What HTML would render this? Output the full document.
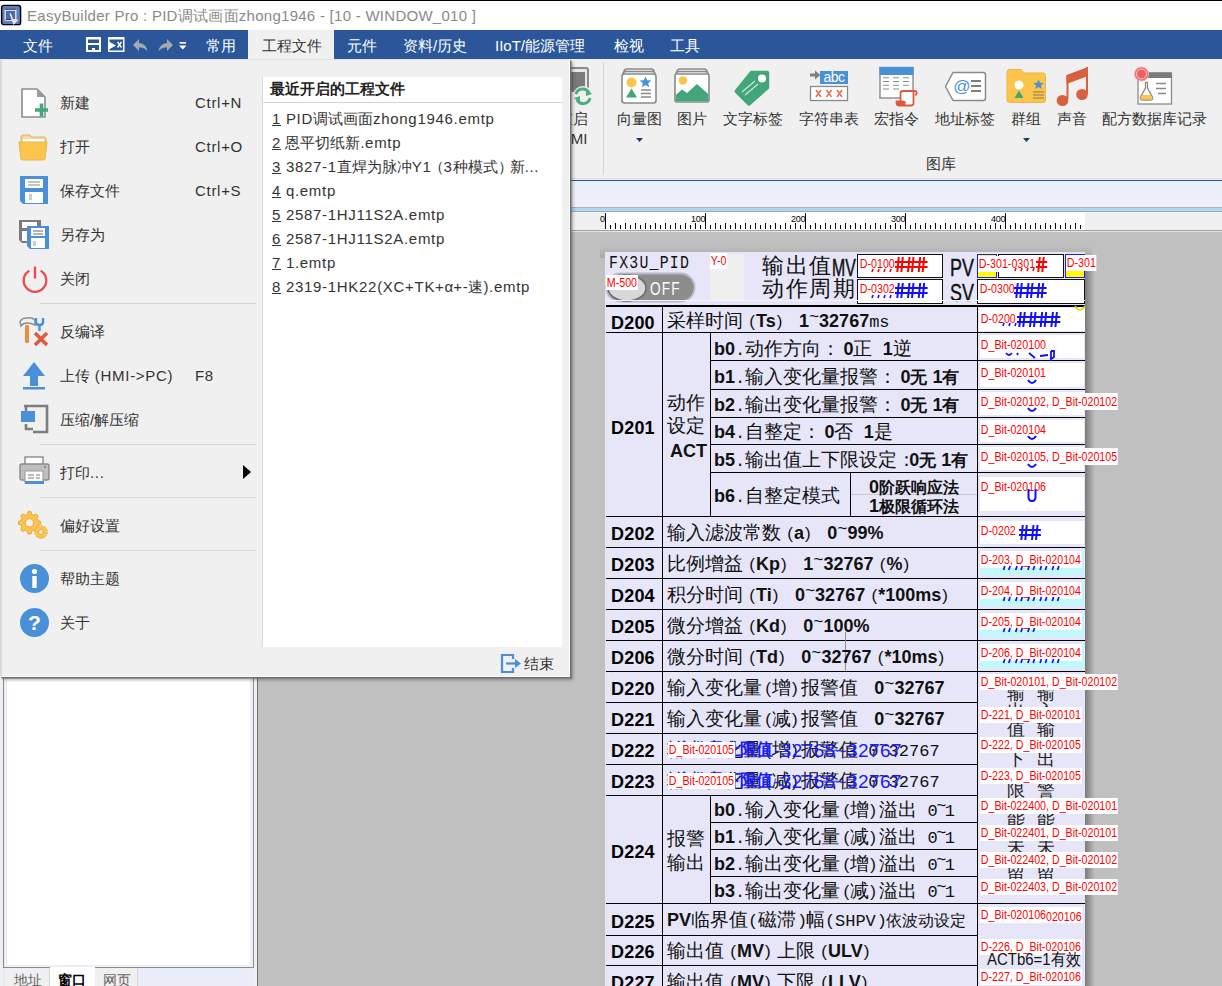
<!DOCTYPE html>
<html><head><meta charset="utf-8">
<style>
*{margin:0;padding:0;box-sizing:border-box}
html,body{width:1222px;height:986px;overflow:hidden;background:#f0f0f0;font-family:"Liberation Sans",sans-serif;position:relative}
.a{position:absolute}
.t{position:absolute;white-space:nowrap;line-height:1}
.lb{position:absolute;white-space:nowrap;line-height:1;font-size:13px;color:#f00;background:#fff;padding:0 1px;transform:scaleX(0.82);transform-origin:0 0}
svg{position:absolute;overflow:visible}
.lp{display:inline-block;width:13px;text-align:right;padding-right:1px;font-size:17px}
.rp{display:inline-block;width:13px;text-align:left;padding-left:1px;font-size:17px}
</style></head><body>
<div class="a" style="left:0px;top:0px;width:1222px;height:1px;background:#000;"></div>
<div class="a" style="left:0px;top:1px;width:1222px;height:29px;background:#fff;"></div>
<svg style="left:0px;top:4px" width="23" height="23"><rect x="1.6" y="1.4" width="19" height="19.2" rx="2.2" fill="#5f7cbc" stroke="#000" stroke-width="1.4"/><rect x="5.2" y="6.2" width="10.6" height="10" fill="#4a68aa" stroke="#f4f4f4" stroke-width="1.2"/><path d="M5 5.3H16" stroke="#4a3a30" stroke-width="0.9"/><path d="M5.6 15.5H11" stroke="#3a3030" stroke-width="0.9"/><path d="M10 9.5L13 15L18.5 15.8L13.5 21L11.5 15.5Z" fill="#dfe6f2"/><path d="M10 9.5L12.2 14" stroke="#fff" stroke-width="1.3"/></svg>
<div class="t" style="left:27px;top:8px;font-size:15px;color:#8a8a8a;letter-spacing:0.27px">EasyBuilder Pro : PID调试画面zhong1946 - [10 - WINDOW_010 ]</div>
<div class="a" style="left:0px;top:30px;width:1222px;height:29px;background:#2b579a;"></div>
<div class="a" style="left:248px;top:30px;width:86px;height:29px;background:#f0f0f0;"></div>
<div class="t" style="left:23px;top:38px;font-size:15px;color:#fff;">文件</div>
<div class="t" style="left:206px;top:38px;font-size:15px;color:#fff;">常用</div>
<div class="t" style="left:347px;top:38px;font-size:15px;color:#fff;">元件</div>
<div class="t" style="left:403px;top:38px;font-size:15px;color:#fff;">资料/历史</div>
<div class="t" style="left:495px;top:38px;font-size:15px;color:#fff;">IIoT/能源管理</div>
<div class="t" style="left:614px;top:38px;font-size:15px;color:#fff;">检视</div>
<div class="t" style="left:670px;top:38px;font-size:15px;color:#fff;">工具</div>
<div class="t" style="left:262px;top:38px;font-size:15px;color:#333;">工程文件</div>
<svg style="left:86px;top:37px" width="15" height="15"><rect x="0" y="0" width="15" height="15" fill="#fff"/><rect x="2" y="2.5" width="11" height="3.5" fill="#2b579a"/><rect x="2" y="8" width="11" height="5" fill="#2b579a"/><rect x="6" y="11" width="3" height="4" fill="#fff"/></svg>
<svg style="left:108px;top:37px" width="17" height="15"><rect x="0" y="0" width="16.5" height="15" fill="#fff"/><rect x="1.5" y="2.5" width="13.5" height="10.5" fill="#2b579a"/><path d="M0 4L8 8.5L0 13Z" fill="#fff"/><path d="M9.5 5L13.5 10.5M13.5 5L9.5 10.5" stroke="#fff" stroke-width="1.4"/><rect x="1.5" y="13" width="13.5" height="1" fill="#9fb3d6"/></svg>
<svg style="left:133px;top:39px" width="16" height="13"><path d="M6 0L0 6L6 12V8.5Q11.5 8 14.5 12.5Q13.5 4.5 6 4Z" fill="#a4a8b2"/></svg>
<svg style="left:157px;top:39px" width="16" height="13"><path d="M10 0L16 6L10 12V8.5Q4.5 8 1.5 12.5Q2.5 4.5 10 4Z" fill="#a4a8b2"/></svg>
<svg style="left:179px;top:42px" width="8" height="10"><rect x="0.5" y="0" width="6.5" height="1.6" fill="#fff"/><path d="M0 3.5H7.5L3.75 7.5Z" fill="#fff"/></svg>
<div class="a" style="left:0px;top:59px;width:1222px;height:121px;background:#f0f0f0;"></div>
<div class="a" style="left:0px;top:178px;width:1222px;height:1px;background:#dcdcdc;"></div>
<div class="a" style="left:603px;top:62px;width:1px;height:113px;background:#d5d5d5;"></div>
<div class="a" style="left:0px;top:180px;width:1222px;height:1px;background:#2b579a;"></div>
<div class="a" style="left:0px;top:181px;width:1222px;height:27px;background:#edf0fa;"></div>
<div class="a" style="left:0px;top:207px;width:1222px;height:1px;background:#b0b0b0;"></div>
<div class="a" style="left:0px;top:208px;width:1222px;height:3px;background:#afd6f3;"></div>
<div class="a" style="left:0px;top:211px;width:1222px;height:1px;background:#a8a8a8;"></div>
<div class="a" style="left:0px;top:212px;width:1222px;height:18px;background:#f0f0f0;"></div>
<div class="a" style="left:605px;top:212px;width:480px;height:18px;background:#fff;"></div>
<div class="a" style="left:0px;top:230px;width:1222px;height:1px;background:#a0a0a0;"></div>
<div class="a" style="left:0px;top:231px;width:1222px;height:1px;background:#e6e6e6;"></div>
<svg style="left:0;top:0" width="1222" height="240"><g fill="#000"><rect x="605" y="213" width="1" height="16"/><rect x="610" y="225" width="1" height="4"/><rect x="615" y="223" width="1" height="6"/><rect x="620" y="225" width="1" height="4"/><rect x="625" y="223" width="1" height="6"/><rect x="630" y="225" width="1" height="4"/><rect x="635" y="223" width="1" height="6"/><rect x="640" y="225" width="1" height="4"/><rect x="645" y="223" width="1" height="6"/><rect x="650" y="225" width="1" height="4"/><rect x="655" y="223" width="1" height="6"/><rect x="660" y="225" width="1" height="4"/><rect x="665" y="223" width="1" height="6"/><rect x="670" y="225" width="1" height="4"/><rect x="675" y="223" width="1" height="6"/><rect x="680" y="225" width="1" height="4"/><rect x="685" y="223" width="1" height="6"/><rect x="690" y="225" width="1" height="4"/><rect x="695" y="223" width="1" height="6"/><rect x="700" y="225" width="1" height="4"/><rect x="705" y="213" width="1" height="16"/><rect x="710" y="225" width="1" height="4"/><rect x="715" y="223" width="1" height="6"/><rect x="720" y="225" width="1" height="4"/><rect x="725" y="223" width="1" height="6"/><rect x="730" y="225" width="1" height="4"/><rect x="735" y="223" width="1" height="6"/><rect x="740" y="225" width="1" height="4"/><rect x="745" y="223" width="1" height="6"/><rect x="750" y="225" width="1" height="4"/><rect x="755" y="223" width="1" height="6"/><rect x="760" y="225" width="1" height="4"/><rect x="765" y="223" width="1" height="6"/><rect x="770" y="225" width="1" height="4"/><rect x="775" y="223" width="1" height="6"/><rect x="780" y="225" width="1" height="4"/><rect x="785" y="223" width="1" height="6"/><rect x="790" y="225" width="1" height="4"/><rect x="795" y="223" width="1" height="6"/><rect x="800" y="225" width="1" height="4"/><rect x="805" y="213" width="1" height="16"/><rect x="810" y="225" width="1" height="4"/><rect x="815" y="223" width="1" height="6"/><rect x="820" y="225" width="1" height="4"/><rect x="825" y="223" width="1" height="6"/><rect x="830" y="225" width="1" height="4"/><rect x="835" y="223" width="1" height="6"/><rect x="840" y="225" width="1" height="4"/><rect x="845" y="223" width="1" height="6"/><rect x="850" y="225" width="1" height="4"/><rect x="855" y="223" width="1" height="6"/><rect x="860" y="225" width="1" height="4"/><rect x="865" y="223" width="1" height="6"/><rect x="870" y="225" width="1" height="4"/><rect x="875" y="223" width="1" height="6"/><rect x="880" y="225" width="1" height="4"/><rect x="885" y="223" width="1" height="6"/><rect x="890" y="225" width="1" height="4"/><rect x="895" y="223" width="1" height="6"/><rect x="900" y="225" width="1" height="4"/><rect x="905" y="213" width="1" height="16"/><rect x="910" y="225" width="1" height="4"/><rect x="915" y="223" width="1" height="6"/><rect x="920" y="225" width="1" height="4"/><rect x="925" y="223" width="1" height="6"/><rect x="930" y="225" width="1" height="4"/><rect x="935" y="223" width="1" height="6"/><rect x="940" y="225" width="1" height="4"/><rect x="945" y="223" width="1" height="6"/><rect x="950" y="225" width="1" height="4"/><rect x="955" y="223" width="1" height="6"/><rect x="960" y="225" width="1" height="4"/><rect x="965" y="223" width="1" height="6"/><rect x="970" y="225" width="1" height="4"/><rect x="975" y="223" width="1" height="6"/><rect x="980" y="225" width="1" height="4"/><rect x="985" y="223" width="1" height="6"/><rect x="990" y="225" width="1" height="4"/><rect x="995" y="223" width="1" height="6"/><rect x="1000" y="225" width="1" height="4"/><rect x="1005" y="213" width="1" height="16"/><rect x="1010" y="225" width="1" height="4"/><rect x="1015" y="223" width="1" height="6"/><rect x="1020" y="225" width="1" height="4"/><rect x="1025" y="223" width="1" height="6"/><rect x="1030" y="225" width="1" height="4"/><rect x="1035" y="223" width="1" height="6"/><rect x="1040" y="225" width="1" height="4"/><rect x="1045" y="223" width="1" height="6"/><rect x="1050" y="225" width="1" height="4"/><rect x="1055" y="223" width="1" height="6"/><rect x="1060" y="225" width="1" height="4"/><rect x="1065" y="223" width="1" height="6"/><rect x="1070" y="225" width="1" height="4"/><rect x="1075" y="223" width="1" height="6"/><rect x="1080" y="225" width="1" height="4"/></g></svg>
<div class="t" style="left:600.0px;top:215px;font-size:9px;color:#000;letter-spacing:-0.3px">0</div>
<div class="t" style="left:691.0px;top:215px;font-size:9px;color:#000;letter-spacing:-0.3px">100</div>
<div class="t" style="left:791.0px;top:215px;font-size:9px;color:#000;letter-spacing:-0.3px">200</div>
<div class="t" style="left:891.0px;top:215px;font-size:9px;color:#000;letter-spacing:-0.3px">300</div>
<div class="t" style="left:991.0px;top:215px;font-size:9px;color:#000;letter-spacing:-0.3px">400</div>
<div class="a" style="left:257px;top:232px;width:965px;height:754px;background:#c0c0c0;"></div>
<div class="a" style="left:256px;top:212px;width:2px;height:774px;background:#707070;"></div>
<div class="a" style="left:1085px;top:258px;width:10px;height:728px;background:linear-gradient(90deg,#7a7a7a,#c0c0c0)"></div>
<div class="a" style="left:600px;top:246px;width:492px;height:12px;background:linear-gradient(180deg,#c0c0c0,#a8a8a8)"></div>
<div class="a" style="left:0px;top:60px;width:257px;height:926px;background:#f0f0f0;"></div>
<div class="a" style="left:3px;top:968px;width:251px;height:18px;background:#eaecf8;"></div>
<div class="a" style="left:3px;top:60px;width:251px;height:908px;background:#fff;border:1px solid #8c8c8c;box-shadow:inset 3px 0 0 #eceefa, inset -3px -2px 0 #eceefa"></div>
<div class="a" style="left:3px;top:968px;width:47px;height:18px;background:#f0f0f0;border-right:1px solid #d8d8d8;border-left:2px solid #e6e8f8"></div>
<div class="a" style="left:50px;top:967px;width:45px;height:19px;background:#fff;"></div>
<div class="a" style="left:95px;top:968px;width:43px;height:18px;background:#f0f0f0;border-right:1px solid #d8d8d8"></div>
<div class="t" style="left:14px;top:973px;font-size:14px;color:#666;">地址</div>
<div class="t" style="left:58px;top:973px;font-size:14px;color:#000;font-weight:bold">窗口</div>
<div class="t" style="left:103px;top:973px;font-size:14px;color:#666;">网页</div>
<svg style="left:555px;top:67px" width="40" height="40"><rect x="0" y="1" width="33" height="23" rx="2" fill="#e8e8e8" stroke="#8a8a8a" stroke-width="2"/><rect x="3" y="5" width="27" height="18" fill="#7a7a7a"/>
<circle cx="28" cy="29" r="10" fill="#f0f0f0"/>
<path d="M21 27A7 7 0 0 1 34 26" fill="none" stroke="#4caf84" stroke-width="3"/><path d="M31 22L37 27L31 29Z" fill="#4caf84"/>
<path d="M35 31A7 7 0 0 1 22 33" fill="none" stroke="#4caf84" stroke-width="3"/><path d="M25 36L19 31L25 29Z" fill="#4caf84"/></svg>
<div class="t" style="left:558px;top:111px;font-size:15px;color:#333;">重启</div>
<div class="t" style="left:560px;top:131px;font-size:15px;color:#333;">HMI</div>
<svg style="left:621px;top:68px" width="37" height="37">
<path d="M3 4Q3 1 6 1H30Q33 1 33 4" fill="none" stroke="#8a8a8a" stroke-width="1.5"/>
<path d="M2 6Q2 3.5 5 3.5H31Q34 3.5 34 6" fill="none" stroke="#8a8a8a" stroke-width="1.5"/>
<rect x="1" y="6" width="34" height="29" rx="2.5" fill="#fff" stroke="#8a8a8a" stroke-width="1.6"/>
<circle cx="10.5" cy="14.5" r="5" fill="#fcc44a"/>
<path d="M24.5 8.5L26.2 12.3L30.3 12.6L27.2 15.2L28.2 19.2L24.5 17L20.8 19.2L21.8 15.2L18.7 12.6L22.8 12.3Z" fill="#4a90d9"/>
<path d="M10.5 20.5L16 29.5H5Z" fill="#43a67a"/>
<path d="M20 22H30M20 25.5H30M20 29H30" stroke="#8a8a8a" stroke-width="1.3"/>
</svg>
<div class="t" style="left:539px;width:200px;text-align:center;top:111px;font-size:15px;color:#333">向量图</div>
<svg style="left:636px;top:138px" width="8" height="5"><path d="M0 0H7L3.5 4Z" fill="#1f3b6e"/></svg>
<svg style="left:674px;top:68px" width="37" height="36">
<path d="M3 4Q3 1 6 1H30Q33 1 33 4" fill="none" stroke="#8a8a8a" stroke-width="1.5"/>
<path d="M2 6Q2 3.5 5 3.5H31Q34 3.5 34 6" fill="none" stroke="#8a8a8a" stroke-width="1.5"/>
<rect x="1" y="6" width="34" height="28" rx="1.5" fill="#fff" stroke="#8a8a8a" stroke-width="1.6"/>
<circle cx="9" cy="12.5" r="4.2" fill="#fcc44a"/>
<path d="M1.8 33.2V27L8 21.5L13 25L23 16L34.2 26V33.2Z" fill="#43a67a"/>
</svg>
<div class="t" style="left:592px;width:200px;text-align:center;top:111px;font-size:15px;color:#333">图片</div>
<svg style="left:734px;top:69px" width="37" height="37">
<path d="M17 2.5H33Q34.5 2.5 34.5 4V19L16 35.5Q15 36.5 14 35.5L1.5 23Q1 22 2 21Z" fill="#43a67a" stroke="#43a67a" stroke-width="1.5" stroke-linejoin="round"/>
<circle cx="28" cy="9.5" r="4" fill="#fff"/>
<path d="M8 23L21 12M11 26L24 15" stroke="#c8e8d8" stroke-width="1.3"/>
</svg>
<div class="t" style="left:653px;width:200px;text-align:center;top:111px;font-size:15px;color:#333">文字标签</div>
<svg style="left:809px;top:70px" width="42" height="34">
<path d="M1 5H7" stroke="#808080" stroke-width="3"/><path d="M6 0.5L11.5 5L6 9.5Z" fill="#808080"/>
<rect x="11" y="1" width="28" height="13" fill="#4a90d9"/>
<text x="25" y="12" text-anchor="middle" font-family="Liberation Sans" font-size="14" fill="#fff" letter-spacing="-0.5">abc</text>
<rect x="1.5" y="16.5" width="37" height="14" fill="#fff" stroke="#8a8a8a" stroke-width="1.3"/>
<path d="M7 20L12 27M12 20L7 27M17.5 20L22.5 27M22.5 20L17.5 27M28 20L33 27M33 20L28 27" stroke="#e0705a" stroke-width="1.6"/>
</svg>
<div class="t" style="left:729px;width:200px;text-align:center;top:111px;font-size:15px;color:#333">字符串表</div>
<svg style="left:878px;top:66px" width="42" height="42">
<rect x="2" y="1.5" width="33" height="30.5" fill="#fff" stroke="#8a8a8a" stroke-width="1.4"/>
<rect x="1.5" y="1" width="34" height="8" fill="#4a90d9"/>
<path d="M5 11.7H11M15 11.7H21M25 11.7H31M5 15.5H11M15 15.5H21M25 15.5H31M5 19.3H11M15 19.3H21M25 19.3H31M5 23H11M15 23H21" stroke="#8a8a8a" stroke-width="1.1"/>
<path d="M22 33V27Q22 24.5 25 24.5H38L38 27.5H36V37Q36 39.5 33 39.5H21Q18.5 39.5 18 36Z" fill="#fff"/>
<path d="M22.5 35V27Q22.5 25 25 25H37Q39 25 38.5 27.5L37.5 29.5M35.5 26V37Q35.5 39.5 33 39.5H21.5Q18.5 39.5 18.5 36.5V35.5H25Q26.5 35.5 27.5 37.5" fill="none" stroke="#dd5a3c" stroke-width="1.8" stroke-linejoin="round"/>
<path d="M18.5 36H25Q26.5 36 27.5 39.5H21Q18.5 39.5 18.5 37Z" fill="#dd5a3c"/>
</svg>
<div class="t" style="left:796px;width:200px;text-align:center;top:111px;font-size:15px;color:#333">宏指令</div>
<svg style="left:944px;top:71px" width="43" height="32">
<path d="M9 1.5H39Q41.5 1.5 41.5 4V27Q41.5 29.5 39 29.5H9L1.5 15.5Z" fill="#fff" stroke="#8a8a8a" stroke-width="1.5" stroke-linejoin="round"/>
<text x="18" y="21" text-anchor="middle" font-family="Liberation Sans" font-size="17" fill="#4a90d9">@</text>
<path d="M27 10H37M27 15H37M27 20H37" stroke="#7d7d7d" stroke-width="2"/>
</svg>
<div class="t" style="left:865px;width:200px;text-align:center;top:111px;font-size:15px;color:#333">地址标签</div>
<svg style="left:1006px;top:68px" width="41" height="36">
<path d="M1 4Q1 1.5 3.5 1.5H15L18 5H37Q39.5 5 39.5 7.5V32Q39.5 34.5 37 34.5H3.5Q1 34.5 1 32Z" fill="#fcc44a" stroke="#e9b54b" stroke-width="1"/>
<circle cx="13" cy="17" r="4.5" fill="#fff"/>
<path d="M32.5 11.5L34 14.8L37.6 15.1L34.9 17.4L35.7 20.9L32.5 19L29.3 20.9L30.1 17.4L27.4 15.1L31 14.8Z" fill="#4a90d9"/>
<path d="M13 22.5L17.5 30H8.5Z" fill="#43a67a"/>
<path d="M27 24H38M27 27H38M27 30H38" stroke="#8a7a5a" stroke-width="1.1"/>
</svg>
<div class="t" style="left:926px;width:200px;text-align:center;top:111px;font-size:15px;color:#333">群组</div>
<svg style="left:1023px;top:138px" width="8" height="5"><path d="M0 0H7L3.5 4Z" fill="#1f3b6e"/></svg>
<svg style="left:1055px;top:66px" width="36" height="42">
<path d="M11.5 9L33 1V10L11.5 18Z" fill="#d9603e"/>
<path d="M12.5 9V33" stroke="#d9603e" stroke-width="2"/>
<path d="M32 1V28" stroke="#d9603e" stroke-width="2"/>
<ellipse cx="7.5" cy="34.5" rx="5.8" ry="5.5" fill="#d9603e"/>
<ellipse cx="27" cy="28.5" rx="5.8" ry="5.5" fill="#d9603e"/>
</svg>
<div class="t" style="left:972px;width:200px;text-align:center;top:111px;font-size:15px;color:#333">声音</div>
<svg style="left:1134px;top:66px" width="42" height="41">
<rect x="4" y="7" width="33.5" height="31" fill="#fff" stroke="#8a8a8a" stroke-width="1.3"/>
<rect x="4" y="6.5" width="33.5" height="5.5" fill="#7a7a7a"/>
<path d="M22 17.5H32M22 22.5H32M24 27.5H32" stroke="#8a8a8a" stroke-width="1.3"/>
<path d="M11.5 16.5V22L6.5 31Q5.5 34 8.5 34H16.5Q19.5 34 18.5 31L13.5 22V16.5Z" fill="#fff" stroke="#8a8a8a" stroke-width="1.3"/>
<path d="M8.2 29H16.8L18.3 31.5Q18.8 33.5 16.5 33.5H8.5Q6.2 33.5 6.7 31.5Z" fill="#fcc44a"/>
<circle cx="7.5" cy="8" r="7" fill="#f06060" stroke="#f8b0b0" stroke-width="1"/>
<circle cx="7.5" cy="8" r="5" fill="none" stroke="#fbd0d0" stroke-width="1"/>
</svg>
<div class="t" style="left:1054px;width:200px;text-align:center;top:111px;font-size:15px;color:#333">配方数据库记录</div>
<div class="t" style="left:926px;top:156px;font-size:15px;color:#333;">图库</div>
<div class="a" style="left:605px;top:252px;width:480px;height:734px;background:#e6e6f8;"></div>
<div class="t" style="left:609px;top:254px;font-size:19px;color:#111;font-family:'Liberation Mono';letter-spacing:1.6px;transform:scaleX(0.78);transform-origin:0 0">FX3U_PID</div>
<div class="a" style="left:710px;top:254px;width:34px;height:46px;background:#efefef;"></div>
<div class="lb" style="left:710px;top:253px;padding:1px 1px 2px 1px">Y-0</div>
<svg style="left:605px;top:272px" width="92" height="32">
<rect x="1.5" y="1.5" width="88" height="28" rx="14" fill="#8c8c8c" stroke="#b8b8c8" stroke-width="2"/>
<ellipse cx="22" cy="16" rx="19" ry="13" fill="#d8d8d8" stroke="#6a6a6a" stroke-width="1.5"/>
</svg>
<div class="t" style="left:650px;top:279px;font-size:19px;color:#fff;transform:scaleX(0.72);transform-origin:0 0;letter-spacing:1.5px">OFF</div>
<div class="lb" style="left:606px;top:275px;padding:1px 1px">M-500</div>
<div class="t" style="left:762px;top:255px;font-size:22px;color:#111;letter-spacing:1.6px">输出值</div>
<div class="t" style="left:832px;top:256px;font-size:24px;color:#111;transform:scaleX(0.66);transform-origin:0 0;-webkit-text-stroke:0.5px #111">MV</div>
<div class="t" style="left:762px;top:278px;font-size:22px;color:#111;letter-spacing:1.6px">动作周期</div>
<div class="t" style="left:950px;top:257px;font-size:23px;color:#111;transform:scaleX(0.78);transform-origin:0 0;-webkit-text-stroke:0.4px #111">PV</div>
<div class="t" style="left:950px;top:282px;font-size:23px;color:#111;transform:scaleX(0.78);transform-origin:0 0;-webkit-text-stroke:0.4px #111">SV</div>
<div class="a" style="left:857px;top:254px;width:86px;height:24px;background:#fff;border:1.5px solid #111"></div>
<div class="a" style="left:857px;top:279px;width:86px;height:25px;background:#fff;border:1.5px solid #111"></div>
<div class="a" style="left:977px;top:254px;width:20px;height:24px;background:#ffff00;border:1.5px solid #1a1aff"></div>
<div class="a" style="left:998px;top:254px;width:66px;height:24px;background:#fff;border:1.5px solid #111"></div>
<div class="a" style="left:1065px;top:254px;width:20px;height:24px;background:#ffff00;border:1.5px solid #1a1aff"></div>
<div class="a" style="left:977px;top:279px;width:108px;height:25px;background:#fff;border:1.5px solid #111"></div>
<div class="lb" style="left:859px;top:257px;background:none">D-0100</div>
<svg style="left:895px;top:257px" width="35" height="16"><path d="M2.3 15L3.8 0M6.3 15L7.8 0M13.0 15L14.5 0M17.0 15L18.5 0M23.7 15L25.2 0M27.7 15L29.2 0M0 5H32.6M0 10H32.6" stroke="#f00" stroke-width="2" fill="none"/></svg>
<svg style="left:871px;top:269px" width="26" height="4"><path d="M1.0 3L2.0 0M7.0 3L8.0 0M13.0 3L14.0 0M19.0 3L20.0 0" stroke="#f00" stroke-width="1.6" fill="none"/></svg>
<div class="lb" style="left:859px;top:282px;background:none">D-0302</div>
<svg style="left:895px;top:283px" width="35" height="16"><path d="M2.3 15L3.8 0M6.3 15L7.8 0M13.0 15L14.5 0M17.0 15L18.5 0M23.7 15L25.2 0M27.7 15L29.2 0M0 5H32.6M0 10H32.6" stroke="#1010ff" stroke-width="2" fill="none"/></svg>
<svg style="left:871px;top:295px" width="26" height="4"><path d="M1.0 3L2.0 0M7.0 3L8.0 0M13.0 3L14.0 0M19.0 3L20.0 0" stroke="#1010ff" stroke-width="1.6" fill="none"/></svg>
<div class="lb" style="left:978px;top:256px;padding:1px 1px 2px 1px">D-301-0301</div>
<svg style="left:1036px;top:257px" width="13" height="16"><path d="M2.3 15L3.8 0M6.3 15L7.8 0M0 5H11.2M0 10H11.2" stroke="#f00" stroke-width="2" fill="none"/></svg>
<svg style="left:1014px;top:268px" width="26" height="4"><path d="M1.0 3L2.0 0M7.0 3L8.0 0M13.0 3L14.0 0M19.0 3L20.0 0" stroke="#f00" stroke-width="1.6" fill="none"/></svg>
<div class="lb" style="left:1066px;top:255px;padding:1px 1px 2px 1px">D-301</div>
<div class="lb" style="left:979px;top:282px;background:none">D-0300</div>
<svg style="left:1014px;top:283px" width="35" height="16"><path d="M2.3 15L3.8 0M6.3 15L7.8 0M13.0 15L14.5 0M17.0 15L18.5 0M23.7 15L25.2 0M27.7 15L29.2 0M0 5H32.6M0 10H32.6" stroke="#1010ff" stroke-width="2" fill="none"/></svg>
<div class="a" style="left:605px;top:300px;width:480px;height:1px;background:#f4f4fa;"></div>
<div class="a" style="left:606px;top:305px;width:479px;height:2px;background:#000;"></div>
<div class="a" style="left:606px;top:332px;width:479px;height:1px;background:#000;"></div>
<div class="a" style="left:606px;top:516px;width:479px;height:1px;background:#000;"></div>
<div class="a" style="left:606px;top:547px;width:479px;height:1px;background:#000;"></div>
<div class="a" style="left:606px;top:578px;width:479px;height:1px;background:#000;"></div>
<div class="a" style="left:606px;top:609px;width:479px;height:1px;background:#000;"></div>
<div class="a" style="left:606px;top:640px;width:479px;height:1px;background:#000;"></div>
<div class="a" style="left:606px;top:671px;width:479px;height:1px;background:#000;"></div>
<div class="a" style="left:606px;top:903px;width:479px;height:1px;background:#000;"></div>
<div class="a" style="left:606px;top:702px;width:372px;height:1px;background:#000;"></div>
<div class="a" style="left:606px;top:733px;width:372px;height:1px;background:#000;"></div>
<div class="a" style="left:606px;top:764px;width:372px;height:1px;background:#000;"></div>
<div class="a" style="left:606px;top:795px;width:372px;height:1px;background:#000;"></div>
<div class="a" style="left:606px;top:935px;width:372px;height:1px;background:#000;"></div>
<div class="a" style="left:606px;top:965px;width:372px;height:1px;background:#000;"></div>
<div class="a" style="left:662px;top:307px;width:1px;height:679px;background:#000;"></div>
<div class="a" style="left:977px;top:307px;width:1px;height:679px;background:#000;"></div>
<div class="a" style="left:710px;top:360px;width:375px;height:1px;background:#000;"></div>
<div class="a" style="left:710px;top:389px;width:375px;height:1px;background:#000;"></div>
<div class="a" style="left:710px;top:417px;width:375px;height:1px;background:#000;"></div>
<div class="a" style="left:710px;top:444px;width:375px;height:1px;background:#000;"></div>
<div class="a" style="left:710px;top:472px;width:375px;height:1px;background:#000;"></div>
<div class="a" style="left:710px;top:332px;width:1px;height:184px;background:#000;"></div>
<div class="a" style="left:850px;top:472px;width:1px;height:44px;background:#000;"></div>
<div class="a" style="left:851px;top:494px;width:126px;height:1px;background:#c8c8d8;"></div>
<div class="a" style="left:710px;top:822px;width:267px;height:1px;background:#000;"></div>
<div class="a" style="left:710px;top:849px;width:267px;height:1px;background:#000;"></div>
<div class="a" style="left:710px;top:876px;width:267px;height:1px;background:#000;"></div>
<div class="a" style="left:710px;top:795px;width:1px;height:108px;background:#000;"></div>
<div class="a" style="left:845px;top:632px;width:1px;height:39px;background:#909090;"></div>
<div class="t" style="left:611px;top:314px;font-size:18px;color:#000;font-weight:bold;letter-spacing:0.2px">D200</div>
<div class="t" style="left:611px;top:419px;font-size:18px;color:#000;font-weight:bold;letter-spacing:0.2px">D201</div>
<div class="t" style="left:611px;top:525px;font-size:18px;color:#000;font-weight:bold;letter-spacing:0.2px">D202</div>
<div class="t" style="left:611px;top:556px;font-size:18px;color:#000;font-weight:bold;letter-spacing:0.2px">D203</div>
<div class="t" style="left:611px;top:587px;font-size:18px;color:#000;font-weight:bold;letter-spacing:0.2px">D204</div>
<div class="t" style="left:611px;top:618px;font-size:18px;color:#000;font-weight:bold;letter-spacing:0.2px">D205</div>
<div class="t" style="left:611px;top:649px;font-size:18px;color:#000;font-weight:bold;letter-spacing:0.2px">D206</div>
<div class="t" style="left:611px;top:680px;font-size:18px;color:#000;font-weight:bold;letter-spacing:0.2px">D220</div>
<div class="t" style="left:611px;top:711px;font-size:18px;color:#000;font-weight:bold;letter-spacing:0.2px">D221</div>
<div class="t" style="left:611px;top:742px;font-size:18px;color:#000;font-weight:bold;letter-spacing:0.2px">D222</div>
<div class="t" style="left:611px;top:773px;font-size:18px;color:#000;font-weight:bold;letter-spacing:0.2px">D223</div>
<div class="t" style="left:611px;top:843px;font-size:18px;color:#000;font-weight:bold;letter-spacing:0.2px">D224</div>
<div class="t" style="left:611px;top:913px;font-size:18px;color:#000;font-weight:bold;letter-spacing:0.2px">D225</div>
<div class="t" style="left:611px;top:943px;font-size:18px;color:#000;font-weight:bold;letter-spacing:0.2px">D226</div>
<div class="t" style="left:611px;top:974px;font-size:18px;color:#000;font-weight:bold;letter-spacing:0.2px">D227</div>
<div class="t" style="left:667px;top:311px;font-size:19px;color:#111;">采样时间<span class="lp">(</span><b><span style="font-family:'Liberation Sans';font-size:18px">Ts</span></b><span class="rp">)</span><span style="font-family:'Liberation Mono';font-size:17px"> </span><b><span style="font-family:'Liberation Sans';font-size:18px">1</span></b><span style="font-family:'Liberation Mono';font-size:17px;position:relative;top:-5px">~</span><b><span style="font-family:'Liberation Sans';font-size:18px">32767</span></b><span style="font-size:16px"><span style="font-family:'Liberation Mono';font-size:17px">ms</span></span></div>
<div class="t" style="left:667px;top:393px;font-size:19px;color:#111;">动作</div>
<div class="t" style="left:667px;top:416px;font-size:19px;color:#111;">设定</div>
<div class="t" style="left:670px;top:441px;font-size:19px;color:#111;"><b><span style="font-family:'Liberation Sans';font-size:18px">ACT</span></b></div>
<div class="t" style="left:714px;top:339px;font-size:19px;color:#111;"><b><span style="font-family:'Liberation Sans';font-size:18px">b0</span></b><span style="font-family:'Liberation Mono';font-size:17px">.</span>动作方向<span style="display:inline-block;width:12px">：</span><span style="font-family:'Liberation Mono';font-size:17px"> </span><b><span style="font-family:'Liberation Sans';font-size:18px">0</span></b>正<span style="font-family:'Liberation Mono';font-size:17px"> </span><b><span style="font-family:'Liberation Sans';font-size:18px">1</span></b>逆</div>
<div class="t" style="left:714px;top:367px;font-size:19px;color:#111;"><b><span style="font-family:'Liberation Sans';font-size:18px">b1</span></b><span style="font-family:'Liberation Mono';font-size:17px">.</span>输入变化量报警<span style="display:inline-block;width:12px">：</span><span style="font-family:'Liberation Mono';font-size:17px"> </span><b style="font-size:17px"><span style="font-family:'Liberation Sans';font-size:18px">0</span>无<span style="font-family:'Liberation Sans';font-size:18px"> 1</span>有</b></div>
<div class="t" style="left:714px;top:395px;font-size:19px;color:#111;"><b><span style="font-family:'Liberation Sans';font-size:18px">b2</span></b><span style="font-family:'Liberation Mono';font-size:17px">.</span>输出变化量报警<span style="display:inline-block;width:12px">：</span><span style="font-family:'Liberation Mono';font-size:17px"> </span><b style="font-size:17px"><span style="font-family:'Liberation Sans';font-size:18px">0</span>无<span style="font-family:'Liberation Sans';font-size:18px"> 1</span>有</b></div>
<div class="t" style="left:714px;top:422px;font-size:19px;color:#111;"><b><span style="font-family:'Liberation Sans';font-size:18px">b4</span></b><span style="font-family:'Liberation Mono';font-size:17px">.</span>自整定<span style="display:inline-block;width:12px">：</span><span style="font-family:'Liberation Mono';font-size:17px"> </span><b><span style="font-family:'Liberation Sans';font-size:18px">0</span></b>否<span style="font-family:'Liberation Mono';font-size:17px"> </span><b><span style="font-family:'Liberation Sans';font-size:18px">1</span></b>是</div>
<div class="t" style="left:714px;top:450px;font-size:19px;color:#111;"><b><span style="font-family:'Liberation Sans';font-size:18px">b5</span></b><span style="font-family:'Liberation Mono';font-size:17px">.</span>输出值上下限设定<span style="display:inline-block;width:12px">：</span><b style="font-size:17px"><span style="font-family:'Liberation Sans';font-size:18px">0</span>无<span style="font-family:'Liberation Sans';font-size:18px"> 1</span>有</b></div>
<div class="t" style="left:714px;top:486px;font-size:19px;color:#111;"><b><span style="font-family:'Liberation Sans';font-size:18px">b6</span></b><span style="font-family:'Liberation Mono';font-size:17px">.</span>自整定模式</div>
<div class="t" style="left:869px;top:478px;font-size:16px;color:#111;"><b style="font-size:16px"><span style="font-family:'Liberation Sans';font-size:18px">0</span>阶跃响应法</b></div>
<div class="t" style="left:869px;top:497px;font-size:16px;color:#111;"><b style="font-size:16px"><span style="font-family:'Liberation Sans';font-size:18px">1</span>极限循环法</b></div>
<div class="t" style="left:667px;top:523px;font-size:19px;color:#111;">输入滤波常数<span class="lp">(</span><b><span style="font-family:'Liberation Sans';font-size:18px">a</span></b><span class="rp">)</span><span style="font-family:'Liberation Mono';font-size:17px"> </span><b><span style="font-family:'Liberation Sans';font-size:18px">0</span></b><span style="font-family:'Liberation Mono';font-size:17px;position:relative;top:-5px">~</span><b><span style="font-family:'Liberation Sans';font-size:18px">99%</span></b></div>
<div class="t" style="left:667px;top:554px;font-size:19px;color:#111;">比例增益<span class="lp">(</span><b><span style="font-family:'Liberation Sans';font-size:18px">Kp</span></b><span class="rp">)</span><span style="font-family:'Liberation Mono';font-size:17px"> </span><b><span style="font-family:'Liberation Sans';font-size:18px">1</span></b><span style="font-family:'Liberation Mono';font-size:17px;position:relative;top:-5px">~</span><b><span style="font-family:'Liberation Sans';font-size:18px">32767</span></b><span class="lp">(</span><b><span style="font-family:'Liberation Sans';font-size:18px">%</span></b><span class="rp">)</span></div>
<div class="t" style="left:667px;top:585px;font-size:19px;color:#111;">积分时间<span class="lp">(</span><b><span style="font-family:'Liberation Sans';font-size:18px">Ti</span></b><span class="rp">)</span><span style="font-family:'Liberation Mono';font-size:17px"> </span><b><span style="font-family:'Liberation Sans';font-size:18px">0</span></b><span style="font-family:'Liberation Mono';font-size:17px;position:relative;top:-5px">~</span><b><span style="font-family:'Liberation Sans';font-size:18px">32767</span></b><span class="lp">(</span><b><span style="font-family:'Liberation Sans';font-size:18px">*100ms</span></b><span class="rp">)</span></div>
<div class="t" style="left:667px;top:616px;font-size:19px;color:#111;">微分增益<span class="lp">(</span><b><span style="font-family:'Liberation Sans';font-size:18px">Kd</span></b><span class="rp">)</span><span style="font-family:'Liberation Mono';font-size:17px"> </span><b><span style="font-family:'Liberation Sans';font-size:18px">0</span></b><span style="font-family:'Liberation Mono';font-size:17px;position:relative;top:-5px">~</span><b><span style="font-family:'Liberation Sans';font-size:18px">100%</span></b></div>
<div class="t" style="left:667px;top:647px;font-size:19px;color:#111;">微分时间<span class="lp">(</span><b><span style="font-family:'Liberation Sans';font-size:18px">Td</span></b><span class="rp">)</span><span style="font-family:'Liberation Mono';font-size:17px"> </span><b><span style="font-family:'Liberation Sans';font-size:18px">0</span></b><span style="font-family:'Liberation Mono';font-size:17px;position:relative;top:-5px">~</span><b><span style="font-family:'Liberation Sans';font-size:18px">32767</span></b><span class="lp">(</span><b><span style="font-family:'Liberation Sans';font-size:18px">*10ms</span></b><span class="rp">)</span></div>
<div class="t" style="left:667px;top:678px;font-size:19px;color:#111;">输入变化量<span class="lp" style="width:10px">(</span>增<span class="rp" style="width:10px">)</span>报警值<span style="font-family:'Liberation Mono';font-size:17px"> </span><span style="margin-left:6px"></span><b><span style="font-family:'Liberation Sans';font-size:18px">0</span></b><span style="font-family:'Liberation Mono';font-size:17px;position:relative;top:-5px">~</span><b><span style="font-family:'Liberation Sans';font-size:18px">32767</span></b></div>
<div class="t" style="left:667px;top:709px;font-size:19px;color:#111;">输入变化量<span class="lp" style="width:10px">(</span>减<span class="rp" style="width:10px">)</span>报警值<span style="font-family:'Liberation Mono';font-size:17px"> </span><span style="margin-left:6px"></span><b><span style="font-family:'Liberation Sans';font-size:18px">0</span></b><span style="font-family:'Liberation Mono';font-size:17px;position:relative;top:-5px">~</span><b><span style="font-family:'Liberation Sans';font-size:18px">32767</span></b></div>
<div class="t" style="left:667px;top:740px;font-size:19px;color:#111;">输出变化量<span class="lp" style="width:10px">(</span>增<span class="rp" style="width:10px">)</span>报警值<span style="font-family:'Liberation Mono';font-size:17px"> 0</span><span style="font-family:'Liberation Mono';font-size:17px;position:relative;top:-5px">~</span><span style="font-family:'Liberation Mono';font-size:17px">32767</span></div>
<div class="t" style="left:667px;top:771px;font-size:19px;color:#111;">输出变化量<span class="lp" style="width:10px">(</span>减<span class="rp" style="width:10px">)</span>报警值<span style="font-family:'Liberation Mono';font-size:17px"> 0</span><span style="font-family:'Liberation Mono';font-size:17px;position:relative;top:-5px">~</span><span style="font-family:'Liberation Mono';font-size:17px">32767</span></div>
<div class="t" style="left:676px;top:741px;font-size:17px;color:#1a1aff;font-weight:bold;letter-spacing:-1px">变化量上限值</div>
<div class="t" style="left:774px;top:741px;font-size:19px;color:#1a1aff;letter-spacing:0.4px">-32768~32767</div>
<div class="t" style="left:676px;top:772px;font-size:17px;color:#1a1aff;font-weight:bold;letter-spacing:-1px">变化量下限值</div>
<div class="t" style="left:774px;top:772px;font-size:19px;color:#1a1aff;letter-spacing:0.4px">-32768~32767</div>
<div class="lb" style="left:668px;top:742px;padding:1px 1px 2px 1px">D_Bit-020105</div>
<div class="lb" style="left:668px;top:773px;padding:1px 1px 2px 1px">D_Bit-020105</div>
<div class="t" style="left:667px;top:829px;font-size:19px;color:#111;">报警</div>
<div class="t" style="left:667px;top:853px;font-size:19px;color:#111;">输出</div>
<div class="t" style="left:714px;top:800px;font-size:19px;color:#111;"><b><span style="font-family:'Liberation Sans';font-size:18px">b0</span></b><span style="font-family:'Liberation Mono';font-size:17px">.</span>输入变化量<span class="lp" style="width:10px">(</span>增<span class="rp" style="width:10px">)</span>溢出<span style="font-family:'Liberation Mono';font-size:17px"> </span><span style="letter-spacing:-1.5px"><span style="font-family:'Liberation Mono';font-size:17px">0</span><span style="font-family:'Liberation Mono';font-size:17px;position:relative;top:-5px">~</span><span style="font-family:'Liberation Mono';font-size:17px">1</span></span></div>
<div class="t" style="left:714px;top:827px;font-size:19px;color:#111;"><b><span style="font-family:'Liberation Sans';font-size:18px">b1</span></b><span style="font-family:'Liberation Mono';font-size:17px">.</span>输入变化量<span class="lp" style="width:10px">(</span>减<span class="rp" style="width:10px">)</span>溢出<span style="font-family:'Liberation Mono';font-size:17px"> </span><span style="letter-spacing:-1.5px"><span style="font-family:'Liberation Mono';font-size:17px">0</span><span style="font-family:'Liberation Mono';font-size:17px;position:relative;top:-5px">~</span><span style="font-family:'Liberation Mono';font-size:17px">1</span></span></div>
<div class="t" style="left:714px;top:854px;font-size:19px;color:#111;"><b><span style="font-family:'Liberation Sans';font-size:18px">b2</span></b><span style="font-family:'Liberation Mono';font-size:17px">.</span>输出变化量<span class="lp" style="width:10px">(</span>增<span class="rp" style="width:10px">)</span>溢出<span style="font-family:'Liberation Mono';font-size:17px"> </span><span style="letter-spacing:-1.5px"><span style="font-family:'Liberation Mono';font-size:17px">0</span><span style="font-family:'Liberation Mono';font-size:17px;position:relative;top:-5px">~</span><span style="font-family:'Liberation Mono';font-size:17px">1</span></span></div>
<div class="t" style="left:714px;top:881px;font-size:19px;color:#111;"><b><span style="font-family:'Liberation Sans';font-size:18px">b3</span></b><span style="font-family:'Liberation Mono';font-size:17px">.</span>输出变化量<span class="lp" style="width:10px">(</span>减<span class="rp" style="width:10px">)</span>溢出<span style="font-family:'Liberation Mono';font-size:17px"> </span><span style="letter-spacing:-1.5px"><span style="font-family:'Liberation Mono';font-size:17px">0</span><span style="font-family:'Liberation Mono';font-size:17px;position:relative;top:-5px">~</span><span style="font-family:'Liberation Mono';font-size:17px">1</span></span></div>
<div class="t" style="left:667px;top:910px;font-size:19px;color:#111;"><b><span style="font-family:'Liberation Sans';font-size:18px">PV</span></b>临界值<span class="lp" style="width:10px"><span style="font-family:'Liberation Mono';font-size:17px">(</span></span>磁滞<span class="rp" style="width:10px"><span style="font-family:'Liberation Mono';font-size:17px">)</span></span>幅<span class="lp" style="width:10px"><span style="font-family:'Liberation Mono';font-size:17px">(</span></span><span style="font-family:'Liberation Mono';font-size:17px">SHPV</span><span class="rp" style="width:10px"><span style="font-family:'Liberation Mono';font-size:17px">)</span></span><span style="font-size:16px">依波动设定</span></div>
<div class="t" style="left:667px;top:941px;font-size:19px;color:#111;">输出值<span class="lp">(</span><b><span style="font-family:'Liberation Sans';font-size:18px">MV</span></b><span class="rp">)</span>上限<span class="lp">(</span><b><span style="font-family:'Liberation Sans';font-size:18px">ULV</span></b><span class="rp">)</span></div>
<div class="t" style="left:667px;top:972px;font-size:19px;color:#111;">输出值<span class="lp">(</span><b><span style="font-family:'Liberation Sans';font-size:18px">MV</span></b><span class="rp">)</span>下限<span class="lp">(</span><b><span style="font-family:'Liberation Sans';font-size:18px">LLV</span></b><span class="rp">)</span></div>
<div class="a" style="left:979px;top:308px;width:106px;height:23px;background:#fff;"></div>
<div class="lb" style="left:980px;top:311px;padding:1px 1px 2px 1px">D-0200</div>
<svg style="left:1017px;top:312px" width="46" height="16"><path d="M2.3 15L3.8 0M6.3 15L7.8 0M13.0 15L14.5 0M17.0 15L18.5 0M23.7 15L25.2 0M27.7 15L29.2 0M34.4 15L35.9 0M38.4 15L39.9 0M0 5H43.3M0 10H43.3" stroke="#1010ff" stroke-width="2" fill="none"/></svg>
<svg style="left:1002px;top:323px" width="20" height="4"><path d="M1.0 3L2.0 0M7.0 3L8.0 0M13.0 3L14.0 0" stroke="#1010ff" stroke-width="1.6" fill="none"/></svg>
<svg style="left:1074px;top:305px" width="12" height="7"><path d="M1 1Q6 9 11 1" fill="none" stroke="#e8d800" stroke-width="1.5"/></svg>
<div class="a" style="left:980px;top:335px;width:104px;height:23px;background:#fff;"></div>
<div class="lb" style="left:980px;top:336px;padding:2px 1px 2px 1px">D_Bit-020100</div>
<div class="a" style="left:980px;top:363px;width:104px;height:24px;background:#fff;"></div>
<div class="lb" style="left:980px;top:364px;padding:2px 1px 2px 1px">D_Bit-020101</div>
<div class="a" style="left:980px;top:392px;width:104px;height:23px;background:#fff;"></div>
<div class="lb" style="left:980px;top:393px;padding:2px 1px 2px 1px">D_Bit-020102, D_Bit-020102</div>
<div class="a" style="left:980px;top:420px;width:104px;height:22px;background:#fff;"></div>
<div class="lb" style="left:980px;top:421px;padding:2px 1px 2px 1px">D_Bit-020104</div>
<div class="a" style="left:980px;top:447px;width:104px;height:23px;background:#fff;"></div>
<div class="lb" style="left:980px;top:448px;padding:2px 1px 2px 1px">D_Bit-020105, D_Bit-020105</div>
<div class="a" style="left:980px;top:477px;width:104px;height:34px;background:#fff;"></div>
<div class="lb" style="left:980px;top:478px;padding:2px 1px 2px 1px">D_Bit-020106</div>
<svg style="left:1027px;top:379px" width="10" height="5"><path d="M1 1Q5.0 7 9 1" fill="none" stroke="#1010ff" stroke-width="2.2"/></svg>
<svg style="left:1027px;top:407px" width="10" height="5"><path d="M1 1Q5.0 7 9 1" fill="none" stroke="#1010ff" stroke-width="2.2"/></svg>
<svg style="left:1027px;top:435px" width="10" height="5"><path d="M1 1Q5.0 7 9 1" fill="none" stroke="#1010ff" stroke-width="2.2"/></svg>
<svg style="left:1027px;top:463px" width="10" height="5"><path d="M1 1Q5.0 7 9 1" fill="none" stroke="#1010ff" stroke-width="2.2"/></svg>
<svg style="left:1027px;top:489px" width="10" height="14"><path d="M1.5 0V8Q1.5 12 5 12Q8.5 12 8.5 8V0" fill="none" stroke="#1010ff" stroke-width="2"/></svg>
<svg style="left:1005px;top:351px" width="80" height="10"><path d="M1 2Q4 6 7 2M13 2L12 4M24 2L30 7M35 5L43 4M46 0V10M46 0H49V6L46 8" fill="none" stroke="#1010ff" stroke-width="1.8"/></svg>
<div class="a" style="left:980px;top:521px;width:104px;height:23px;background:#fff;"></div>
<div class="lb" style="left:980px;top:522px;padding:2px 1px 2px 1px">D-0202</div>
<svg style="left:1019px;top:525px" width="24" height="16"><path d="M2.3 15L3.8 0M6.3 15L7.8 0M13.0 15L14.5 0M17.0 15L18.5 0M0 5H21.9M0 10H21.9" stroke="#1010ff" stroke-width="2" fill="none"/></svg>
<div class="a" style="left:980px;top:551px;width:104px;height:24px;background:#c0f8fc;"></div>
<div class="lb" style="left:980px;top:551px;padding:2px 1px 2px 1px">D-203, D_Bit-020104</div>
<svg style="left:1002px;top:566px" width="70" height="6"><path d="M1.5 4L2.8 0M6.8 4L8.1 0M13.7 4L15.0 0M19.0 4L20.3 0M25.9 4L27.2 0M31.2 4L32.5 0M38.1 4L39.4 0M43.4 4L44.7 0M50.3 4L51.6 0M55.6 4L56.9 0" stroke="#1010ff" stroke-width="1.7" fill="none"/></svg>
<div class="a" style="left:980px;top:582px;width:104px;height:24px;background:#c0f8fc;"></div>
<div class="lb" style="left:980px;top:582px;padding:2px 1px 2px 1px">D-204, D_Bit-020104</div>
<svg style="left:1002px;top:597px" width="70" height="6"><path d="M1.5 4L2.8 0M6.8 4L8.1 0M13.7 4L15.0 0M19.0 4L20.3 0M25.9 4L27.2 0M31.2 4L32.5 0M38.1 4L39.4 0M43.4 4L44.7 0M50.3 4L51.6 0M55.6 4L56.9 0" stroke="#1010ff" stroke-width="1.7" fill="none"/></svg>
<div class="a" style="left:980px;top:613px;width:104px;height:24px;background:#c0f8fc;"></div>
<div class="lb" style="left:980px;top:613px;padding:2px 1px 2px 1px">D-205, D_Bit-020104</div>
<svg style="left:1002px;top:628px" width="70" height="6"><path d="M1.5 4L2.8 0M6.8 4L8.1 0M13.7 4L15.0 0M19.0 4L20.3 0M25.9 4L27.2 0M31.2 4L32.5 0" stroke="#1010ff" stroke-width="1.7" fill="none"/></svg>
<div class="a" style="left:980px;top:644px;width:104px;height:24px;background:#c0f8fc;"></div>
<div class="lb" style="left:980px;top:644px;padding:2px 1px 2px 1px">D-206, D_Bit-020104</div>
<svg style="left:1002px;top:659px" width="70" height="6"><path d="M1.5 4L2.8 0M6.8 4L8.1 0M13.7 4L15.0 0M19.0 4L20.3 0M25.9 4L27.2 0M31.2 4L32.5 0M38.1 4L39.4 0M43.4 4L44.7 0M50.3 4L51.6 0M55.6 4L56.9 0" stroke="#1010ff" stroke-width="1.7" fill="none"/></svg>
<div class="t" style="left:1007px;top:684px;font-size:18px;color:#222;">输</div>
<div class="t" style="left:1037px;top:684px;font-size:18px;color:#222;">输</div>
<div class="t" style="left:1007px;top:702px;font-size:18px;color:#222;">出</div>
<div class="t" style="left:1037px;top:702px;font-size:18px;color:#222;">入</div>
<div class="t" style="left:1007px;top:720px;font-size:18px;color:#222;">值</div>
<div class="t" style="left:1037px;top:720px;font-size:18px;color:#222;">输</div>
<div class="t" style="left:1007px;top:750px;font-size:18px;color:#222;">下</div>
<div class="t" style="left:1037px;top:750px;font-size:18px;color:#222;">出</div>
<div class="t" style="left:1007px;top:781px;font-size:18px;color:#222;">限</div>
<div class="t" style="left:1037px;top:781px;font-size:18px;color:#222;">警</div>
<div class="t" style="left:1007px;top:812px;font-size:18px;color:#222;">能</div>
<div class="t" style="left:1037px;top:812px;font-size:18px;color:#222;">能</div>
<div class="t" style="left:1007px;top:838px;font-size:18px;color:#222;">未</div>
<div class="t" style="left:1037px;top:838px;font-size:18px;color:#222;">未</div>
<div class="t" style="left:1007px;top:865px;font-size:18px;color:#222;">留</div>
<div class="t" style="left:1037px;top:865px;font-size:18px;color:#222;">留</div>
<div class="lb" style="left:980px;top:674px;padding:1px 1px 2px 1px">D_Bit-020101, D_Bit-020102</div>
<div class="lb" style="left:980px;top:707px;padding:1px 1px 2px 1px">D-221, D_Bit-020101</div>
<div class="lb" style="left:980px;top:737px;padding:1px 1px 2px 1px">D-222, D_Bit-020105</div>
<div class="lb" style="left:980px;top:768px;padding:1px 1px 2px 1px">D-223, D_Bit-020105</div>
<div class="lb" style="left:980px;top:798px;padding:1px 1px 2px 1px">D_Bit-022400, D_Bit-020101</div>
<div class="lb" style="left:980px;top:825px;padding:1px 1px 2px 1px">D_Bit-022401, D_Bit-020101</div>
<div class="lb" style="left:980px;top:852px;padding:1px 1px 2px 1px">D_Bit-022402, D_Bit-020102</div>
<div class="lb" style="left:980px;top:879px;padding:1px 1px 2px 1px">D_Bit-022403, D_Bit-020102</div>
<div class="lb" style="left:980px;top:907px;padding:1px 1px 2px 1px">D_Bit-020106<span style="position:relative;top:2px">020106</span></div>
<div class="lb" style="left:980px;top:939px;padding:1px 1px 2px 1px">D-226, D_Bit-020106</div>
<div class="lb" style="left:980px;top:969px;padding:1px 1px 2px 1px">D-227, D_Bit-020106</div>
<div class="t" style="left:987px;top:951px;font-size:17px;color:#111;transform:scaleX(0.88);transform-origin:0 0">ACTb6=1有效</div>
<!-- dropdown menu -->
<div class="a" style="left:0;top:59px;width:570px;height:618px;background:#f0f0f0;border-left:2px solid #dadada;border-top:1px solid #e2e2e2;border-right:1px solid #fafafa;border-bottom:1px solid #fafafa;box-shadow:1.5px 1.5px 0 #707070, 3px 3px 3px rgba(0,0,0,0.3)"></div>
<div class="a" style="left:262px;top:77px;width:300px;height:570px;background:#fff;border-left:1px solid #d9d9d9"></div>
<div class="a" style="left:263px;top:102px;width:299px;height:1px;background:#d5d5d5"></div>
<div class="t" style="left:270px;top:81px;font-size:15px;font-weight:bold;color:#222">最近开启的工程文件</div>
<div class="t" style="left:272px;top:111px;font-size:15px;color:#333;line-height:1"><u><span style="letter-spacing:0.7px">1</span></u><span style="letter-spacing:0.7px"> PID</span>调试画面<span style="letter-spacing:0.7px">zhong1946.emtp</span></div>
<div class="t" style="left:272px;top:135px;font-size:15px;color:#333"><u><span style="letter-spacing:0.7px">2</span></u> 恩平切纸新<span style="letter-spacing:0.7px">.emtp</span></div>
<div class="t" style="left:272px;top:159px;font-size:15px;color:#333"><u><span style="letter-spacing:0.7px">3</span></u><span style="letter-spacing:0.7px"> 3827-1</span>直焊为脉冲<span style="letter-spacing:0.7px">Y1</span><span style="margin-left:-3px">（</span><span style="letter-spacing:0.7px">3</span>种模式<span style="letter-spacing:-3px">）</span>新<span style="letter-spacing:0.7px">...</span></div>
<div class="t" style="left:272px;top:183px;font-size:15px;color:#333"><u><span style="letter-spacing:0.7px">4</span></u><span style="letter-spacing:0.7px"> q.emtp</span></div>
<div class="t" style="left:272px;top:207px;font-size:15px;color:#333"><u><span style="letter-spacing:0.7px">5</span></u><span style="letter-spacing:0.7px"> 2587-1HJ11S2A.emtp</span></div>
<div class="t" style="left:272px;top:231px;font-size:15px;color:#333"><u><span style="letter-spacing:0.7px">6</span></u><span style="letter-spacing:0.7px"> 2587-1HJ11S2A.emtp</span></div>
<div class="t" style="left:272px;top:255px;font-size:15px;color:#333"><u><span style="letter-spacing:0.7px">7</span></u><span style="letter-spacing:0.7px"> 1.emtp</span></div>
<div class="t" style="left:272px;top:279px;font-size:15px;color:#333"><u><span style="letter-spacing:0.7px">8</span></u><span style="letter-spacing:0.7px"> 2319-1HK22(XC+TK+</span>α<span style="letter-spacing:0.7px">+-</span>速<span style="letter-spacing:0.7px">).emtp</span></div>

<div class="t" style="left:60px;top:95px;font-size:15px;color:#333">新建</div>
<div class="t" style="left:195px;top:95px;font-size:15px;color:#333"><span style="letter-spacing:0.7px">Ctrl+N</span></div>
<div class="t" style="left:60px;top:139px;font-size:15px;color:#333">打开</div>
<div class="t" style="left:195px;top:139px;font-size:15px;color:#333"><span style="letter-spacing:0.7px">Ctrl+O</span></div>
<div class="t" style="left:60px;top:183px;font-size:15px;color:#333">保存文件</div>
<div class="t" style="left:195px;top:183px;font-size:15px;color:#333"><span style="letter-spacing:0.7px">Ctrl+S</span></div>
<div class="t" style="left:60px;top:227px;font-size:15px;color:#333">另存为</div>
<div class="t" style="left:60px;top:271px;font-size:15px;color:#333">关闭</div>
<div class="a" style="left:40px;top:303px;width:216px;height:1px;background:#d5d5d5"></div>
<div class="t" style="left:60px;top:324px;font-size:15px;color:#333">反编译</div>
<div class="t" style="left:60px;top:368px;font-size:15px;color:#333">上传<span style="letter-spacing:0.7px"> (HMI-&gt;PC)</span></div>
<div class="t" style="left:195px;top:368px;font-size:15px;color:#333"><span style="letter-spacing:0.7px">F8</span></div>
<div class="t" style="left:60px;top:412px;font-size:15px;color:#333">压缩/解压缩</div>
<div class="a" style="left:40px;top:444px;width:216px;height:1px;background:#d5d5d5"></div>
<div class="t" style="left:60px;top:465px;font-size:15px;color:#333">打印<span style="letter-spacing:0.7px">...</span></div>
<svg class="a" style="left:243px;top:465px" width="8" height="14"><path d="M0 0L8 7L0 14Z" fill="#000"/></svg>
<div class="a" style="left:40px;top:497px;width:216px;height:1px;background:#d5d5d5"></div>
<div class="t" style="left:60px;top:518px;font-size:15px;color:#333">偏好设置</div>
<div class="a" style="left:40px;top:550px;width:216px;height:1px;background:#d5d5d5"></div>
<div class="t" style="left:60px;top:571px;font-size:15px;color:#333">帮助主题</div>
<div class="t" style="left:60px;top:615px;font-size:15px;color:#333">关于</div>
<!-- end button -->
<svg class="a" style="left:500px;top:653px" width="24" height="21"><path d="M13 6V2H2V19H13V15" fill="none" stroke="#4a90d9" stroke-width="2.2"/><path d="M6 10.5H16" stroke="#4a90d9" stroke-width="2.2"/><path d="M15 6L21 10.5L15 15Z" fill="#4a90d9"/></svg>
<div class="t" style="left:524px;top:656px;font-size:15px;color:#333">结束</div>

<!-- icons -->
<svg class="a" style="left:18px;top:86px" width="32" height="34">
 <path d="M4 3H19L27 11V31H4Z" fill="#fff" stroke="#8c8c8c" stroke-width="1.6" stroke-linejoin="round"/>
 <path d="M19 3L27 11H19Z" fill="#9a9a9a"/>
 <path d="M17 24H30M23.5 17.5V30.5" stroke="#43a67a" stroke-width="3.6"/>
</svg>
<svg class="a" style="left:18px;top:133px" width="32" height="28">
 <path d="M3 4Q3 2 5 2H12L14 4H26Q28 4 28 6V10H3Z" fill="#f4d79a" stroke="#e2b45a" stroke-width="1"/>
 <path d="M5 6H26V12H5Z" fill="#fff"/>
 <path d="M1 9H29L27 26Q27 27 25 27H4Q3 27 3 26Z" fill="#fcc44a" stroke="#e9b54b" stroke-width="1"/>
</svg>
<svg class="a" style="left:20px;top:176px" width="29" height="28">
 <path d="M0 0H28V28H3L0 25Z" fill="#4a90d9"/>
 <rect x="5" y="3" width="18" height="9" fill="#fff"/>
 <path d="M8 6H20M8 9H20" stroke="#888" stroke-width="1"/>
 <rect x="5" y="16" width="18" height="11" fill="#fff"/>
 <rect x="9" y="18" width="3" height="6" fill="#ccc"/>
</svg>
<svg class="a" style="left:18px;top:219px" width="32" height="32">
 <path d="M1 1H23V24H4L1 21Z" fill="#7b7b7b"/>
 <rect x="4" y="3" width="15" height="6" fill="#fff"/>
 <rect x="4" y="12" width="15" height="10" fill="#fff"/>
 <path d="M9 7H31V30H12L9 27Z" fill="#4a90d9"/>
 <rect x="13" y="9" width="14" height="8" fill="#fff"/>
 <path d="M15 12H25M15 15H25" stroke="#666" stroke-width="1"/>
 <rect x="13" y="19" width="14" height="10" fill="#fff"/>
 <rect x="15" y="22" width="3" height="5" fill="#ccc"/>
</svg>
<svg class="a" style="left:21px;top:265px" width="28" height="28">
 <path d="M8.3 5.8A11.3 11.3 0 1 0 19.7 5.8" fill="none" stroke="#ee4a4a" stroke-width="2.3"/>
 <path d="M14 1.5V13.5" stroke="#ee4a4a" stroke-width="2.3"/>
</svg>
<svg class="a" style="left:19px;top:316px" width="30" height="31">
 <path d="M1 6Q2 2 8 2Q13 1 16 4V9Q12 7 8 7Q4 7 2 10Z" fill="#eee" stroke="#8c8c8c" stroke-width="1.4"/>
 <rect x="6" y="9" width="4" height="18" rx="1.5" fill="#ee8a3a"/>
 <path d="M17 2V6Q17 9 20.5 9Q24 9 24 6V2M20.5 9V15" fill="none" stroke="#4a90d9" stroke-width="2.4"/>
 <path d="M16 17L28 29M28 17L16 29" stroke="#e05a3e" stroke-width="3.6"/>
</svg>
<svg class="a" style="left:22px;top:361px" width="24" height="30">
 <path d="M1 15L12 1L23 15H16V25H8V15Z" fill="#4a90d9"/>
 <rect x="1" y="26" width="22" height="2.5" fill="#4a90d9"/>
</svg>
<svg class="a" style="left:20px;top:404px" width="30" height="31">
 <path d="M4 2H27V28H13M6 8V3M6 20V25H13" fill="none" stroke="#7d7d7d" stroke-width="2.6"/>
 <rect x="1" y="7" width="14" height="11" fill="#4a90d9"/>
</svg>
<svg class="a" style="left:19px;top:456px" width="32" height="30">
 <rect x="6" y="1" width="18" height="8" fill="#fff" stroke="#888" stroke-width="1.4"/>
 <rect x="1" y="8" width="29" height="16" rx="2" fill="#bfbfbf" stroke="#8a8a8a" stroke-width="1.4"/>
 <rect x="6" y="15" width="18" height="12" fill="#fff" stroke="#999" stroke-width="1"/>
 <path d="M9 19H15M17 19H21M9 22H15M17 22H21" stroke="#777" stroke-width="1"/>
 <rect x="6" y="25" width="19" height="3" fill="#4a90d9"/>
 <circle cx="26" cy="11" r="1" fill="#777"/>
</svg>
<svg class="a" style="left:18px;top:510px" width="32" height="30">
 <g fill="#fcc44a" stroke="#e9a83a" stroke-width="1">
 <path d="M10 1.5L13 1.5L13.6 4.2L15.8 5.3L18.2 3.9L20.3 6L18.9 8.4L19.9 10.6L22.6 11.3V14.3L19.9 14.9L18.9 17.1L20.3 19.5L18.2 21.6L15.8 20.2L13.6 21.2L13 24H10L9.4 21.2L7.2 20.2L4.8 21.6L2.7 19.5L4.1 17.1L3.1 14.9L0.4 14.3V11.3L3.1 10.6L4.1 8.4L2.7 6L4.8 3.9L7.2 5.3L9.4 4.2Z"/>
 </g>
 <circle cx="11.5" cy="12.8" r="4.2" fill="#f0f0f0" stroke="#e9a83a" stroke-width="1"/>
 <g transform="translate(23,22)">
 <circle r="6.3" fill="#fcc44a" stroke="#e9a83a" stroke-width="1" stroke-dasharray="2 1.2"/>
 <circle r="2.5" fill="#f0f0f0" stroke="#e9a83a" stroke-width="1"/>
 </g>
</svg>
<svg class="a" style="left:20px;top:564px" width="30" height="30">
 <circle cx="14.5" cy="14.5" r="14.5" fill="#4a90d9"/>
 <circle cx="14.5" cy="7.5" r="2.6" fill="#fff"/>
 <rect x="12.3" y="12" width="4.4" height="12" fill="#fff"/>
</svg>
<svg class="a" style="left:20px;top:608px" width="30" height="30">
 <circle cx="14.5" cy="14.5" r="14.5" fill="#4a90d9"/>
 <text x="14.5" y="22" text-anchor="middle" font-family="Liberation Sans" font-weight="bold" font-size="21" fill="#fff">?</text>
</svg>

</body></html>
